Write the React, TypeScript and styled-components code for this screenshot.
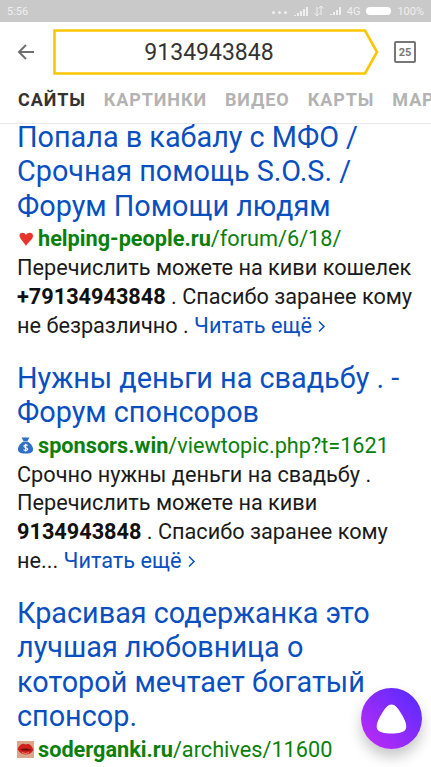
import styled, { createGlobalStyle } from "styled-components";

const GlobalStyle = createGlobalStyle`
  html, body {
    margin: 0;
    padding: 0;
    background: #fff;
  }
  body {
    font-family: Roboto, "Liberation Sans", sans-serif;
  }
`;

const Screen = styled.div`
  position: relative;
  width: 431px;
  height: 767px;
  overflow: hidden;
  background: #fff;
`;

const StatusBar = styled.div`
  height: 22px;
  background: #c9c9c9;
  color: #efefef;
  font-size: 11px;
  display: flex;
  align-items: center;
  justify-content: space-between;
  padding: 0 7px;
`;

const StatusRight = styled.div`
  display: flex;
  align-items: center;
  gap: 6px;
`;

const Dots = styled.span`
  display: flex;
  gap: 3px;
  margin-top: 3px;
  margin-right: 1px;

  i {
    width: 3px;
    height: 3px;
    border-radius: 50%;
    background: #efefef;
  }
`;

const Battery = styled.span`
  width: 25px;
  height: 8px;
  border-radius: 4px;
  background: #fff;
`;

const SearchRow = styled.div`
  height: 54px;
  display: flex;
  align-items: center;
  padding: 6px 0 0 17px;
  box-sizing: border-box;
`;

const BackButton = styled.div`
  width: 18px;
  height: 18px;
  margin-right: 18px;
`;

const SearchBox = styled.div`
  position: relative;
  width: 326px;
  height: 46px;
  display: flex;
  align-items: center;
  justify-content: center;
  color: #333;
  font-size: 23px;
  padding-right: 14px;
  box-sizing: border-box;
`;

const SearchShape = styled.svg`
  position: absolute;
  inset: 0;
`;

const SearchText = styled.span`
  position: relative;
`;

const CalendarIcon = styled.div`
  width: 22px;
  height: 22px;
  margin-left: 15px;
  box-sizing: border-box;
  border: 2px solid #777;
  border-radius: 2px;
  color: #777;
  font-size: 11px;
  font-weight: 700;
  display: flex;
  align-items: center;
  justify-content: center;
`;

const Tabs = styled.div`
  height: 48px;
  display: flex;
  align-items: center;
  padding-left: 18px;
  gap: 18px;
  white-space: nowrap;
  overflow: hidden;
  border-bottom: 1px solid #e8e8e8;
  box-sizing: border-box;
`;

const Tab = styled.span<{ $active?: boolean }>`
  font-size: 18px;
  font-weight: 700;
  letter-spacing: 0.9px;
  color: ${({ $active }) => ($active ? "#333" : "#b3b3b3")};
`;

const Results = styled.div`
  padding: 0 17px;
  margin-top: -4px;
`;

const Result = styled.div`
  margin-bottom: 20.5px;
`;

const Title = styled.div`
  font-size: 28.8px;
  line-height: 34.4px;
  color: #0a4fc0;
  white-space: nowrap;
`;

const UrlRow = styled.div`
  display: flex;
  align-items: center;
  height: 31px;
  font-size: 21.7px;
  color: #0a800a;
  white-space: nowrap;
`;

const Favicon = styled.svg`
  width: 17px;
  height: 17px;
  margin-right: 4px;
  flex: none;
`;

const Domain = styled.b`
  font-weight: 700;
`;

const Snippet = styled.div`
  font-size: 21.7px;
  line-height: 28.7px;
  color: #1a1a1a;
  white-space: nowrap;
`;

const Phone = styled.b`
  font-weight: 700;
  color: #111;
`;

const ReadMore = styled.span`
  color: #0a4fc0;
`;

const ChevronIcon = styled.svg`
  width: 9px;
  height: 13px;
`;

const AliceButton = styled.div`
  position: absolute;
  left: 361px;
  top: 688px;
  width: 61px;
  height: 61px;
  border-radius: 50%;
  background: linear-gradient(45deg, #b82bf5 10%, #5c2bff 90%);
  box-shadow: 0 8px 14px rgba(0, 0, 0, 0.22);
  display: flex;
  align-items: center;
  justify-content: center;
`;

const Chevron = () => (
  <ChevronIcon viewBox="0 0 9 13">
    <path d="M2 1.5 L7 6.5 L2 11.5" fill="none" stroke="#0a4fc0" strokeWidth="1.5" />
  </ChevronIcon>
);

const results = [
  {
    title: ["Попала в кабалу с МФО /", "Срочная помощь S.O.S. /", "Форум Помощи людям"],
    domain: "helping-people.ru",
    path: "/forum/6/18/",
    icon: "heart",
    snippet: (
      <>
        Перечислить можете на киви кошелек
        <br />
        <Phone>+79134943848</Phone> . Спасибо заранее кому
        <br />
        не безразлично . <ReadMore>Читать ещё <Chevron /></ReadMore>
      </>
    ),
  },
  {
    title: ["Нужны деньги на свадьбу . -", "Форум спонсоров"],
    domain: "sponsors.win",
    path: "/viewtopic.php?t=1621",
    icon: "bag",
    snippet: (
      <>
        Срочно нужны деньги на свадьбу .
        <br />
        Перечислить можете на киви
        <br />
        <Phone>9134943848</Phone> . Спасибо заранее кому
        <br />
        не... <ReadMore>Читать ещё <Chevron /></ReadMore>
      </>
    ),
  },
  {
    title: ["Красивая содержанка это", "лучшая любовница о", "которой мечтает богатый", "спонсор."],
    domain: "soderganki.ru",
    path: "/archives/11600",
    icon: "lips",
  },
];

const SiteIcon = ({ kind }: { kind: string }) => {
  if (kind === "heart") {
    return (
      <Favicon viewBox="0 0 17 17">
        <path d="M9 16 C7 12 2.5 9 2.5 5.5 C2.5 2.5 7 1.5 9 5 C11 1.5 16 2.5 16 6 C16 9.5 11 12 9 16 Z" fill="#e8352c" />
      </Favicon>
    );
  }
  if (kind === "bag") {
    return (
      <Favicon viewBox="0 0 17 17">
        <path d="M4.5 0.5 L12.5 0.5 L10.5 4 L6.5 4 Z" fill="#2f6fc4" />
        <path d="M6.5 4.5 L10.5 4.5 C14 6.5 16.5 10 16 13 C15.5 16 12 16.5 8.5 16.5 C5 16.5 1.5 16 1 13 C0.5 10 3 6.5 6.5 4.5 Z" fill="#2f6fc4" />
        <path d="M10.6 8.6 C9.8 7.6 6.9 7.6 6.9 9.3 C6.9 11 10.7 10.4 10.7 12.2 C10.7 13.9 7.6 13.9 6.6 12.7 M8.7 6.8 V14.6" fill="none" stroke="#fff" strokeWidth="1.1" />
      </Favicon>
    );
  }
  return (
    <Favicon viewBox="0 0 17 17">
      <rect width="17" height="17" fill="#d9a78e" />
      <path d="M0.5 8 C3 2.5 6.5 2 8.5 3.5 C11 2 14.5 3 16.5 9 C13 15 4 15.5 0.5 8 Z" fill="#d0201e" />
      <path d="M3 8.5 C7 7 11 7 14.5 9 C11 10 6 10 3 8.5 Z" fill="#6d0d0d" />
      <path d="M5 11.5 C7.5 12.8 10 12.5 12 11.5" fill="none" stroke="#f08a80" strokeWidth="1" />
    </Favicon>
  );
};

export default function App() {
  return (
    <>
      <GlobalStyle />
      <Screen>
        <StatusBar>
          <span>5:56</span>
          <StatusRight>
            <Dots>
              <i />
              <i />
              <i />
            </Dots>
            <svg width="14" height="9" viewBox="0 0 14 9">
              <path d="M0 9h2V8H0zM3 9h2V6H3zM6 9h2V4H6zM9 9h2V2H9zM12 9h2V0h-2z" fill="#efefef" />
            </svg>
            <svg width="10" height="10" viewBox="0 0 10 10">
              <path d="M3 10V1M0.7 7.5L3 10l2.3-2.5M7 0v9M4.7 2.5L7 0l2.3 2.5" stroke="#efefef" fill="none" />
            </svg>
            <svg width="11" height="8" viewBox="0 0 11 8">
              <path d="M0 8h2V7H0zM3 8h2V5H3zM6 8h2V3H6zM9 8h2V0H9z" fill="#efefef" />
            </svg>
            <span>4G</span>
            <Battery />
            <span>100%</span>
          </StatusRight>
        </StatusBar>
        <SearchRow>
          <BackButton>
            <svg width="18" height="18" viewBox="0 0 18 18">
              <path d="M17 9H2M9 2 L2 9 L9 16" fill="none" stroke="#6f6f6f" strokeWidth="2" />
            </svg>
          </BackButton>
          <SearchBox>
            <SearchShape width="326" height="46" viewBox="0 0 326 46">
              <path d="M1.5 1.5H312L324 23L312 44.5H1.5Z" fill="none" stroke="#fcc600" strokeWidth="2.6" />
            </SearchShape>
            <SearchText>9134943848</SearchText>
          </SearchBox>
          <CalendarIcon>25</CalendarIcon>
        </SearchRow>
        <Tabs>
          <Tab $active>САЙТЫ</Tab>
          <Tab>КАРТИНКИ</Tab>
          <Tab>ВИДЕО</Tab>
          <Tab>КАРТЫ</Tab>
          <Tab>МАРКЕТ</Tab>
        </Tabs>
        <Results>
          {results.map((r) => (
            <Result key={r.domain}>
              <Title>
                {r.title.map((line) => (
                  <div key={line}>{line}</div>
                ))}
              </Title>
              <UrlRow>
                <SiteIcon kind={r.icon} />
                <span>
                  <Domain>{r.domain}</Domain>
                  {r.path}
                </span>
              </UrlRow>
              {r.snippet && <Snippet>{r.snippet}</Snippet>}
            </Result>
          ))}
        </Results>
        <AliceButton>
          <svg width="31" height="30" viewBox="0 0 31 30">
            <path d="M15.5 0.5 C19.5 0.5 22.5 5 26 11 C29 16 31 20.5 30 24.5 C29 28.5 22 29.5 15.5 29.5 C9 29.5 2 28.5 1 24.5 C0 20.5 2 16 5 11 C8.5 5 11.5 0.5 15.5 0.5 Z" fill="#fff" />
          </svg>
        </AliceButton>
      </Screen>
    </>
  );
}
